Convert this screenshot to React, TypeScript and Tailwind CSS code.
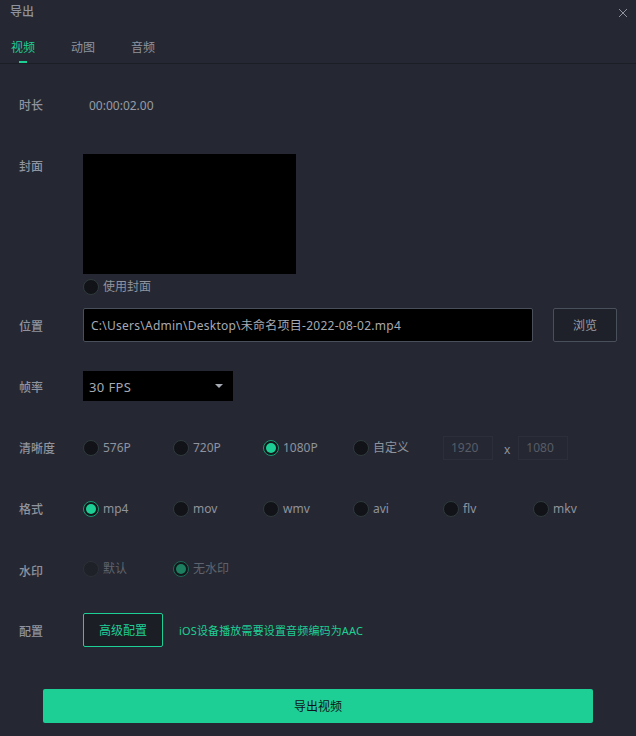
import React from "react";

const font = { fontFamily: '"Noto Sans", "Noto Sans CJK SC", sans-serif' };

function Radio({ label, checked, disabled, w = "w-[90px]" }: { label: string; checked?: boolean; disabled?: boolean; w?: string }) {
  const ring = checked
    ? disabled ? "border-[#1a6b55] bg-[#14171c]" : "border-[#179a72] bg-[#14171c]"
    : disabled ? "border-[#2b3036] bg-[#1e2127]" : "border-[#2f3a3c] bg-[#111318]";
  return (
    <div className={`flex items-center ${w} ${disabled ? "text-[#5f636d]" : "text-[#8f939e]"}`}>
      <span className={`flex h-4 w-4 items-center justify-center rounded-full border ${ring}`}>
        {checked && <span className={`h-2.5 w-2.5 rounded-full ${disabled ? "bg-[#1c7f60]" : "bg-[#1ecf95]"}`} />}
      </span>
      <span className="ml-[4px] text-xs leading-4">{label}</span>
    </div>
  );
}

function Row({ label, className, labelClass, children }: { label: string; className?: string; labelClass?: string; children: React.ReactNode }) {
  return (
    <div className={`flex items-center pl-[19px] ${className ?? ""}`}>
      <span className={`w-[64px] shrink-0 text-xs font-medium text-[#8f939e] ${labelClass ?? ""}`}>{label}</span>
      {children}
    </div>
  );
}

export default function App() {
  return (
    <div className="flex h-[736px] w-[636px] flex-col overflow-hidden bg-[#252832]" style={font}>
      <div className="flex h-[24px] items-center justify-between pl-[10px] pr-[8px] text-xs font-medium text-[#8f939e]">
        <span>导出</span>
        <svg width="10" height="10" viewBox="0 0 10 10" className="mt-[1px]" stroke="#9a9ea8" strokeWidth="0.9" fill="none">
          <path d="M1 1L9 9M9 1L1 9" />
        </svg>
      </div>
      <div className="flex h-[40px] items-center gap-[36px] border-b border-[#1c1e25] pl-[11px] text-xs text-[#8f939e]">
        <div className="relative flex h-full items-center pt-[9px] text-[#1ecf95]">
          <span>视频</span>
          <span className="absolute bottom-0 left-[8px] h-[2px] w-[8px] bg-[#1ecf95]" />
        </div>
        <span className="pt-[9px]">动图</span>
        <span className="pt-[9px]">音频</span>
      </div>

      <Row label="时长" className="mt-[32px] h-[20px]">
        <span className="ml-[6px] text-xs text-[#979ba7]">00:00:02.00</span>
      </Row>

      <div className="mt-[38px] flex pl-[19px]">
        <span className="mt-[5px] w-[64px] shrink-0 text-xs font-medium text-[#8f939e]">封面</span>
        <div>
          <div className="h-[120px] w-[213px] bg-black" />
          <div className="mt-[5px]">
            <Radio label="使用封面" w="w-[120px]" />
          </div>
        </div>
      </div>

      <Row label="位置" className="mt-[13px] h-[34px]" labelClass="pt-[4px]">
        <div className="flex h-[34px] w-[450px] items-center rounded-[2px] border border-[#4a4f5c] bg-black pl-[7px] pt-[1px] text-xs tracking-[0.25px] text-[#a6aab3]">
          C:\Users\Admin\Desktop\未命名项目-2022-08-02.mp4
        </div>
        <button className="ml-[20px] h-[34px] w-[64px] rounded-[2px] border border-[#4a4f5c] bg-[#1e2129] pt-[1px] text-xs text-[#9a9ea8]">浏览</button>
      </Row>

      <Row label="帧率" className="mt-[29px] h-[30px]" labelClass="pt-[4px]">
        <div className="flex h-[30px] w-[150px] items-center justify-between bg-black pl-[6px] pr-[10px] text-[13px] tracking-[0.4px] text-[#a6aab3]">
          <span className="pt-[3px]">30 FPS</span>
          <svg width="8" height="4" viewBox="0 0 8 4" fill="#a6aab3"><path d="M0 0H8L4 4Z" /></svg>
        </div>
      </Row>

      <Row label="清晰度" className="mt-[32px] h-[30px]" labelClass="pt-[2px]">
        <div className="flex items-center">
          <Radio label="576P" />
          <Radio label="720P" />
          <Radio label="1080P" checked />
          <Radio label="自定义" />
          <div className="flex h-[24px] w-[50px] items-center border border-[#2c2f39] pl-[7px] text-xs text-[#585c67]">1920</div>
          <span className="ml-[11px] mt-[3px] text-xs text-[#8f939e]">x</span>
          <div className="ml-[8px] flex h-[24px] w-[50px] items-center border border-[#2c2f39] pl-[7px] text-xs text-[#585c67]">1080</div>
        </div>
      </Row>

      <Row label="格式" className="mt-[31px] h-[30px]" labelClass="pt-[2px]">
        <div className="flex items-center">
          <Radio label="mp4" checked />
          <Radio label="mov" />
          <Radio label="wmv" />
          <Radio label="avi" />
          <Radio label="flv" />
          <Radio label="mkv" />
        </div>
      </Row>

      <Row label="水印" className="mt-[30px] h-[30px]" labelClass="pt-[5px]">
        <div className="flex items-center">
          <Radio label="默认" disabled />
          <Radio label="无水印" checked disabled />
        </div>
      </Row>

      <Row label="配置" className="mt-[29px] h-[34px]" labelClass="pt-[3px]">
        <button className="h-[34px] w-[80px] rounded-[2px] border border-[#1ecf95] bg-[#1b1e25] pt-[1px] text-xs text-[#1ecf95]">高级配置</button>
        <span className="ml-[16px] pt-[3px] text-[11px] tracking-[0.15px] text-[#1ecf95]">iOS设备播放需要设置音频编码为AAC</span>
      </Row>

      <div className="mt-[42px] pl-[43px]">
        <button className="h-[34px] w-[550px] rounded-[2px] bg-[#1ecf95] pt-[2px] text-xs text-[#10131a]">导出视频</button>
      </div>
    </div>
  );
}
